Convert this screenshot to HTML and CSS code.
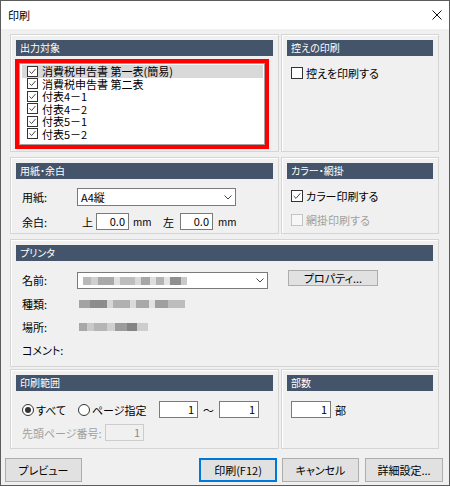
FILE: index.html
```html
<!DOCTYPE html>
<html lang="ja">
<head>
<meta charset="UTF-8">
<title>印刷</title>
<link rel="stylesheet" href="styles.css">
</head>
<body>

<div class="window">
    <div class="titlebar">
        <span class="title">印刷</span>
        <svg class="close" width="10" height="10" viewBox="0 0 10 10"><path d="M0.5 0.5l9 9M9.5 0.5l-9 9" stroke="#111" stroke-width="1" fill="none"/></svg>
    </div>

    <div class="content">
        <!-- 出力対象 / 控えの印刷 -->
        <div class="row row-top">
            <section class="group col-left">
                <h2 class="group-head">出力対象</h2>
                <div class="mark">
                    <ul class="list">
                        <li class="item selected"><span class="cb small"><svg viewBox="0 0 11 11"><path d="M1.8 5.4l2.6 2.6 4.8-5.6" fill="none" stroke="#222"/></svg></span>消費税申告書 第一表(簡易)</li>
                        <li class="item"><span class="cb small"><svg viewBox="0 0 11 11"><path d="M1.8 5.4l2.6 2.6 4.8-5.6" fill="none" stroke="#222"/></svg></span>消費税申告書 第二表</li>
                        <li class="item"><span class="cb small"><svg viewBox="0 0 11 11"><path d="M1.8 5.4l2.6 2.6 4.8-5.6" fill="none" stroke="#222"/></svg></span>付表4－1</li>
                        <li class="item"><span class="cb small"><svg viewBox="0 0 11 11"><path d="M1.8 5.4l2.6 2.6 4.8-5.6" fill="none" stroke="#222"/></svg></span>付表4－2</li>
                        <li class="item"><span class="cb small"><svg viewBox="0 0 11 11"><path d="M1.8 5.4l2.6 2.6 4.8-5.6" fill="none" stroke="#222"/></svg></span>付表5－1</li>
                        <li class="item"><span class="cb small"><svg viewBox="0 0 11 11"><path d="M1.8 5.4l2.6 2.6 4.8-5.6" fill="none" stroke="#222"/></svg></span>付表5－2</li>
                    </ul>
                </div>
            </section>
            <section class="group col-right">
                <h2 class="group-head">控えの印刷</h2>
                <div class="check first"><span class="cb"></span>控えを印刷する</div>
            </section>
        </div>

        <!-- 用紙・余白 / カラー・網掛 -->
        <div class="row row-paper">
            <section class="group col-left">
                <h2 class="group-head">用紙・余白</h2>
                <div class="field paper-field">
                    <span class="field-label">用紙:</span>
                    <div class="combo paper-combo">
                        <span>A4縦</span>
                        <svg width="8" height="5" viewBox="0 0 8 5"><path d="M0.5 0.5l3.5 3.5 3.5-3.5" fill="none" stroke="#444"/></svg>
                    </div>
                </div>
                <div class="field margin-field">
                    <span class="field-label">余白:</span>
                    <span class="side">上</span>
                    <span class="num num-top">0.0</span>
                    <span class="unit">mm</span>
                    <span class="side side-left">左</span>
                    <span class="num num-left">0.0</span>
                    <span class="unit unit-last">mm</span>
                </div>
            </section>
            <section class="group col-right">
                <h2 class="group-head">カラー・網掛</h2>
                <div class="check first"><span class="cb"><svg viewBox="0 0 12 12"><path d="M2 6l2.8 2.8 5.2-6" fill="none" stroke="#222"/></svg></span>カラー印刷する</div>
                <div class="check second disabled"><span class="cb"></span>網掛印刷する</div>
            </section>
        </div>

        <!-- プリンタ -->
        <section class="group printer">
            <h2 class="group-head">プリンタ</h2>
            <div class="field name-field">
                <span class="field-label">名前:</span>
                <div class="combo printer-combo">
                    <span class="blur blur-name"></span>
                    <svg width="8" height="5" viewBox="0 0 8 5"><path d="M0.5 0.5l3.5 3.5 3.5-3.5" fill="none" stroke="#444"/></svg>
                </div>
                <div class="btn btn-props">プロパティ...</div>
            </div>
            <div class="field info-field first-info">
                <span class="field-label wide">種類:</span>
                <span class="blur blur-kind"></span>
            </div>
            <div class="field info-field">
                <span class="field-label wide">場所:</span>
                <span class="blur blur-place"></span>
            </div>
            <div class="field info-field">
                <span class="field-label wide">コメント:</span>
            </div>
        </section>

        <!-- 印刷範囲 / 部数 -->
        <div class="row row-range">
            <section class="group col-left">
                <h2 class="group-head">印刷範囲</h2>
                <div class="field range-field">
                    <span class="radio-opt opt-all"><span class="radio on"></span>すべて</span>
                    <span class="radio-opt opt-page"><span class="radio"></span>ページ指定</span>
                    <span class="num num-from">1</span>
                    <span class="tilde">～</span>
                    <span class="num num-to">1</span>
                </div>
                <div class="field start-field disabled">
                    <span class="start-label">先頭ページ番号:</span>
                    <span class="num num-start">1</span>
                </div>
            </section>
            <section class="group col-right">
                <h2 class="group-head">部数</h2>
                <div class="field copies-field">
                    <span class="num num-copies">1</span>
                    <span class="copies-unit">部</span>
                </div>
            </section>
        </div>

        <div class="buttons">
            <div class="btn btn-preview">プレビュー</div>
            <div class="btn btn-print">印刷(F12)</div>
            <div class="btn btn-cancel">キャンセル</div>
            <div class="btn btn-detail">詳細設定...</div>
        </div>
    </div>
</div>

</body>
</html>
```

FILE: styles.css
```css
body {
    margin: 0;
    padding: 0;
    background: #fff;
    color: #000;
    font-family: "Noto Sans CJK JP", "Noto Sans", sans-serif;
    font-size: 11px;
    font-feature-settings: "palt" 1;
}

.window {
    width: 450px;
    height: 486px;
    box-sizing: border-box;
    border: 1px solid #5c5c5c;
    background: #f0f0f0;
}

.titlebar {
    height: 28px;
    background: #fff;
    display: flex;
    align-items: center;
    justify-content: space-between;
    padding: 0 7px;
}

.title {
    font-size: 11px;
}

.content {
    padding: 5px 10px 0 9px;
}

.row {
    display: flex;
    gap: 2px;
}

.row-top {
    height: 118px;
    margin-bottom: 5px;
}

.row-paper {
    height: 77px;
    margin-bottom: 5px;
}

.printer {
    height: 128px;
    margin-bottom: 2px;
}

.row-range {
    height: 80px;
}

.col-left {
    width: 269px;
}

.col-right {
    width: 158px;
}

/* group boxes */
.group {
    box-sizing: border-box;
    border: 1px solid #d5d5d5;
    box-shadow: inset 1px 1px 0 #fff;
    padding: 5px 5px 0;
}

.group-head {
    margin: 0;
    height: 16px;
    line-height: 16px;
    padding-left: 4px;
    background: #44546a;
    color: #fff;
    font-size: 10px;
    font-weight: normal;
}

/* red annotation round the list */
.mark {
    margin: 3px 0 0 -1px;
    width: 254px;
    height: 90px;
    box-sizing: border-box;
    border: 4px solid #f00;
}

.list {
    margin: 0;
    padding: 1px 1px 0 2px;
    list-style: none;
    height: 100%;
    box-sizing: border-box;
    background: #fff;
    border: 1px solid #a0a0a0;
}

.item {
    display: flex;
    align-items: center;
    height: 12.5px;
    line-height: 12.5px;
    padding-left: 5px;
    white-space: nowrap;
}

.item.selected {
    background: #d9d9d9;
}

/* check boxes and radios */
.cb {
    display: inline-flex;
    width: 12px;
    height: 12px;
    box-sizing: border-box;
    border: 1px solid #333;
    background: #fff;
    flex: none;
}

.cb svg {
    display: block;
    width: 100%;
    height: 100%;
}

.cb.small {
    width: 11px;
    height: 11px;
    margin-right: 4px;
}

.check {
    display: flex;
    align-items: center;
    height: 14px;
    padding-left: 4px;
    white-space: nowrap;
}

.check .cb {
    margin-right: 3px;
}

.check.first {
    margin-top: 10px;
}

.check.second {
    margin-top: 10px;
}

.disabled {
    color: #a0a0a0;
}

.check.disabled .cb {
    border-color: #c4c4c4;
    background: #f7f7f7;
}

.radio {
    display: inline-block;
    width: 12px;
    height: 12px;
    box-sizing: border-box;
    border: 1px solid #333;
    border-radius: 50%;
    background: #fff;
    margin-right: 2px;
    position: relative;
    flex: none;
}

.radio.on::after {
    content: "";
    position: absolute;
    left: 2px;
    top: 2px;
    width: 6px;
    height: 6px;
    border-radius: 50%;
    background: #333;
}

/* form rows */
.field {
    display: flex;
    align-items: center;
    padding-left: 6px;
    white-space: nowrap;
}

.field-label {
    width: 55px;
    flex: none;
}

.field-label.wide {
    width: 57px;
}

.paper-field {
    margin-top: 9px;
    height: 18px;
}

.combo {
    box-sizing: border-box;
    border: 1px solid #7a7a7a;
    background: #fff;
    display: flex;
    align-items: center;
    justify-content: space-between;
    padding: 0 3px 0 3px;
}

.paper-combo {
    width: 159px;
    height: 18px;
}

.margin-field {
    margin-top: 7px;
    height: 17px;
}

.side {
    margin-left: 5px;
}

.side-left {
    margin-left: 0;
}

.num {
    box-sizing: border-box;
    height: 17px;
    line-height: 15px;
    border: 1px solid #7a7a7a;
    background: #fff;
    text-align: right;
    padding-right: 3px;
    flex: none;
}

.num-top,
.num-left {
    width: 33px;
}

.num-top {
    margin-left: 3px;
}

.num-left {
    margin-left: 6px;
}

.unit {
    width: 30px;
    margin-left: 4px;
    font-size: 10px;
}

.unit-last {
    margin-left: 5px;
}

/* printer */
.name-field {
    margin-top: 11px;
    height: 17px;
    align-items: flex-start;
}

.name-field .field-label {
    line-height: 17px;
}

.printer-combo {
    width: 191px;
    height: 17px;
}

.btn {
    box-sizing: border-box;
    border: 1px solid #adadad;
    background: #e1e1e1;
    display: flex;
    align-items: center;
    justify-content: center;
    white-space: nowrap;
}

.btn-props {
    width: 90px;
    height: 16px;
    margin: -2px 0 0 20px;
}

.info-field {
    height: 23px;
}

.first-info {
    margin-top: 3px;
}

.blur {
    display: inline-block;
    height: 8px;
    filter: blur(0.7px);
}

.blur-name {
    width: 104px;
    margin-left: 2px;
    background: linear-gradient(90deg, #b9b9b9 0 8%, #cfcfcf 8% 14%, #a9a9a9 14% 30%, #e0e0e0 30% 36%, #bdbdbd 36% 50%, #d9d9d9 50% 56%, #a7a7a7 56% 64%, #dedede 64% 70%, #b3b3b3 70% 78%, #e4e4e4 78% 84%, #8f8f8f 84% 94%, #c9c9c9 94% 100%);
}

.blur-kind {
    width: 106px;
    background: linear-gradient(90deg, #a3a3a3 0 10%, #8c8c8c 10% 26%, #d7d7d7 26% 32%, #b1b1b1 32% 48%, #dadada 48% 54%, #a9a9a9 54% 66%, #e2e2e2 66% 72%, #9f9f9f 72% 84%, #bdbdbd 84% 100%);
}

.blur-place {
    width: 69px;
    background: linear-gradient(90deg, #a8a8a8 0 12%, #c9c9c9 12% 22%, #b5b5b5 22% 40%, #cfcfcf 40% 52%, #9c9c9c 52% 70%, #848484 70% 84%, #cdcdcd 84% 100%);
}

/* range and copies */
.range-field {
    margin-top: 10px;
    height: 17px;
}

.radio-opt {
    display: flex;
    align-items: center;
    flex: none;
}

.opt-all {
    width: 56px;
}

.opt-page {
    width: 81px;
}

.num-from {
    width: 39px;
}

.tilde {
    width: 21px;
    text-align: center;
}

.num-to {
    width: 40px;
}

.start-field {
    margin-top: 6px;
    height: 17px;
}

.start-label {
    width: 83px;
}

.num-start {
    width: 39px;
    border-color: #cccccc;
    background: #f0f0f0;
    color: #8a8a8a;
}

.copies-field {
    margin-top: 10px;
    height: 17px;
    padding-left: 4px;
}

.num-copies {
    width: 40px;
}

.copies-unit {
    margin-left: 4px;
}

/* bottom buttons */
.buttons {
    display: flex;
    height: 24px;
    margin: 9px -4px 0 -5px;
}

.buttons .btn {
    height: 24px;
}

.btn-preview {
    width: 77px;
}

.btn-print {
    width: 78px;
    margin-left: auto;
    border-color: #0078d7;
    box-shadow: inset 0 0 0 1px #0078d7;
}

.btn-cancel {
    width: 77px;
    margin-left: 5px;
}

.btn-detail {
    width: 78px;
    margin-left: 6px;
}
```
